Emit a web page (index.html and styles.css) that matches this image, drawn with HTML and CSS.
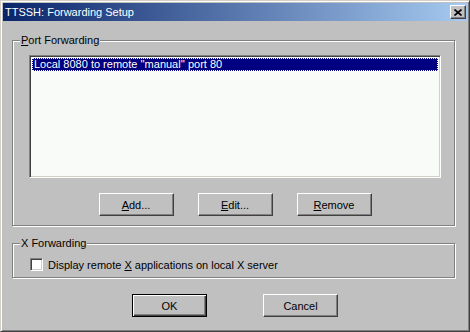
FILE: index.html
```html
<!DOCTYPE html>
<html lang="en">
  <head>
    <meta charset="UTF-8" />
    <title>TTSSH: Forwarding Setup</title>
    <link rel="stylesheet" href="styles.css">
  </head>
  <body>
    <div class="window">
      <div class="titlebar">
        <span class="title">TTSSH: Forwarding Setup</span>
        <button class="close-btn" aria-label="Close">
          <svg width="8" height="7" viewBox="0 0 8 7">
            <path d="M0.5 0.5 L7.5 6.5 M7.5 0.5 L0.5 6.5" stroke="#000" stroke-width="1.6" />
          </svg>
        </button>
      </div>

      <div class="dialog-body">
        <fieldset class="group">
          <legend><u>P</u>ort Forwarding</legend>
          <div class="group-content port-content">
            <div class="listbox">
              <div class="list-item selected">Local 8080 to remote ''manual'' port 80</div>
            </div>
            <div class="button-row">
              <button class="btn"><u>A</u>dd...</button>
              <button class="btn"><u>E</u>dit...</button>
              <button class="btn"><u>R</u>emove</button>
            </div>
          </div>
        </fieldset>

        <fieldset class="group x-group">
          <legend>X Forwarding</legend>
          <div class="group-content x-content">
            <label class="check-row">
              <span class="checkbox"></span>
              <span>Display remote <u>X</u> applications on local X server</span>
            </label>
          </div>
        </fieldset>

        <div class="dialog-buttons">
          <button class="btn default">OK</button>
          <button class="btn">Cancel</button>
        </div>
      </div>
    </div>
  </body>
</html>
```

FILE: styles.css
```css
body {
  margin: 0;
  font-family: "Liberation Sans", Arial, sans-serif;
  font-size: 11px;
  color: #000;
  background-color: #c0c0c0;
}

.window {
  width: 470px;
  height: 332px;
  box-sizing: border-box;
  padding: 2px;
  background-color: #c0c0c0;
  border: 1px solid;
  border-color: #d4d0c8 #404040 #404040 #d4d0c8;
  box-shadow: inset 1px 1px 0 #fff, inset -1px -1px 0 #808080;
}

.titlebar {
  height: 18px;
  display: flex;
  align-items: center;
  justify-content: space-between;
  padding: 0 1px;
  background: linear-gradient(to right, #0a246a, #a6caf0);
}

.title {
  color: #fff;
  font-size: 11px;
  padding-left: 1px;
}

.close-btn {
  width: 16px;
  height: 14px;
  padding: 0;
  display: flex;
  align-items: center;
  justify-content: center;
  background-color: #c0c0c0;
  border: 1px solid;
  border-color: #fff #404040 #404040 #fff;
  box-shadow: inset -1px -1px 0 #808080;
}

.dialog-body {
  padding: 12px 0 0 9px;
}

.group {
  margin: 0;
  padding: 0;
  width: 443px;
  min-width: 0;
  box-sizing: border-box;
  border: 1px solid #808080;
  box-shadow: inset 1px 1px 0 #fff, 1px 1px 0 #fff;
}

.group legend {
  line-height: 14px;
  padding: 0 1px;
  margin-left: 7px;
  background-color: #c0c0c0;
}

.port-content {
  padding: 8px 13px 9px 16px;
}

.listbox {
  height: 123px;
  box-sizing: border-box;
  padding: 2px;
  background-color: #f8fbf8;
  border: 1px solid;
  border-color: #808080 #fff #fff #808080;
  box-shadow: inset 1px 1px 0 #404040, inset -1px -1px 0 #d4d0c8;
}

.list-item {
  height: 13px;
  line-height: 13px;
  padding-left: 2px;
}

.list-item.selected {
  background-color: #000080;
  color: #fff;
  outline: 1px dotted #fff;
  outline-offset: -1px;
}

.button-row {
  display: flex;
  justify-content: center;
  gap: 24px;
  margin-top: 15px;
}

.btn {
  width: 75px;
  height: 23px;
  padding: 0;
  font-family: inherit;
  font-size: 11px;
  color: #000;
  background-color: #c0c0c0;
  border: 1px solid;
  border-color: #fff #404040 #404040 #fff;
  box-shadow: inset -1px -1px 0 #808080;
}

.btn.default {
  border-color: #000;
  box-shadow: inset 1px 1px 0 #fff, inset -1px -1px 0 #404040, inset -2px -2px 0 #808080;
}

.x-group {
  margin-top: 10px;
}

.x-content {
  padding: 8px 13px 6px 17px;
}

.check-row {
  display: flex;
  align-items: center;
  gap: 5px;
  height: 13px;
}

.checkbox {
  width: 13px;
  height: 13px;
  box-sizing: border-box;
  background-color: #fff;
  border: 1px solid;
  border-color: #808080 #fff #fff #808080;
  box-shadow: inset 1px 1px 0 #404040, inset -1px -1px 0 #d4d0c8;
}

.dialog-buttons {
  display: flex;
  justify-content: center;
  gap: 56px;
  width: 464px;
  margin-left: -9px;
  margin-top: 16px;
}
```
